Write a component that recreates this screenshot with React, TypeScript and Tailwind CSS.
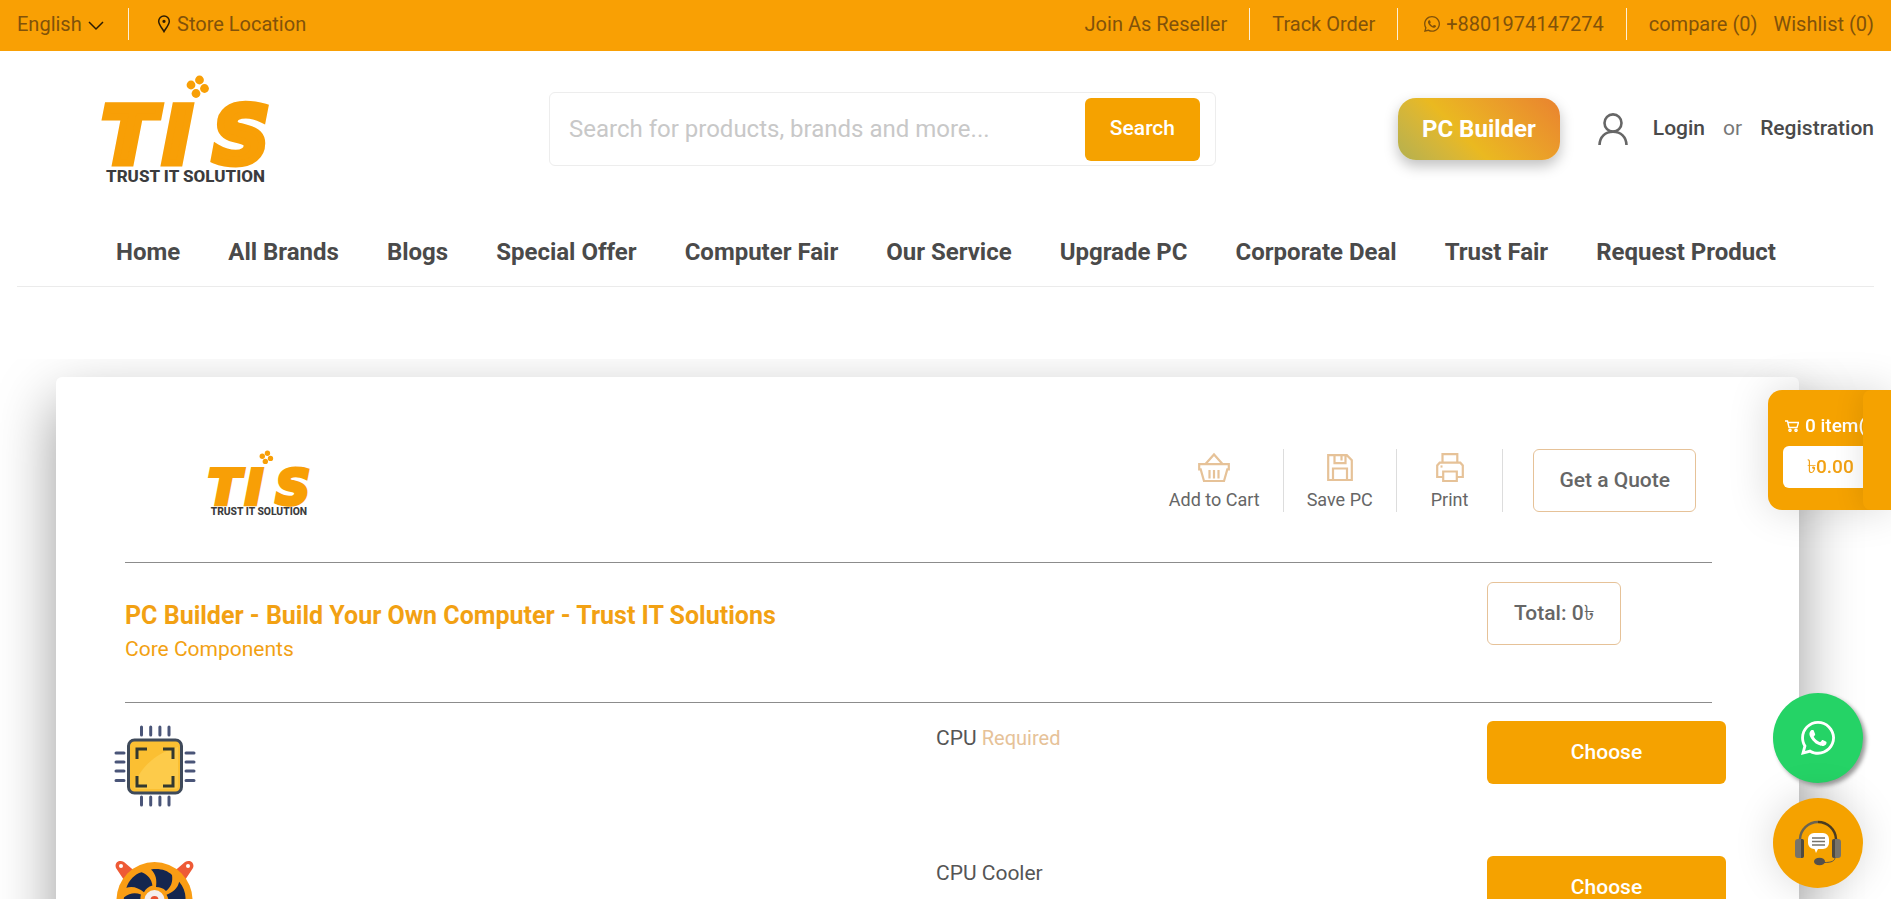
import React from "react";

const navLinks = [
  "Home",
  "All Brands",
  "Blogs",
  "Special Offer",
  "Computer Fair",
  "Our Service",
  "Upgrade PC",
  "Corporate Deal",
  "Trust Fair",
  "Request Product",
];

const Logo: React.FC<{ className: string }> = ({ className }) => (
  <svg viewBox="0 -2 186 112" className={className} role="img" aria-label="TIS Trust IT Solution">
    <g fill="#f89f06">
      <circle cx="91" cy="10" r="4.4" />
      <circle cx="99.5" cy="5" r="4.4" />
      <circle cx="104.5" cy="13.5" r="4.4" />
      <circle cx="96" cy="18.5" r="4.4" />
    </g>
    <text
      x="2 63 113"
      y="88"
      fontFamily="'DejaVu Sans', sans-serif"
      fontSize="78"
      fontWeight="700"
      fontStyle="italic"
      fill="#f89f06"
      stroke="#f89f06"
      strokeWidth="7"
    >
      TIS
    </text>
    <text
      x="6"
      y="107"
      fontFamily="Roboto, sans-serif"
      fontSize="17"
      fontWeight="800"
      fill="#3b3b3d"
    >
      TRUST IT SOLUTION
    </text>
  </svg>
);

const PinIcon = () => (
  <svg viewBox="0 0 14 18" className="h-[18px] w-[14px]" fill="none" stroke="#2c1c04" strokeWidth="1.5">
    <path d="M7 16.6C5.200 13.300 1.700 9.500 1.700 6.200a5.300 5.300 0 0 1 10.600 0C12.300 9.500 8.800 13.300 7 16.600z" />
    <circle cx="7" cy="6.3" r="0.9" fill="#2c1c04" />
  </svg>
);

const WhatsappIcon: React.FC<{ className: string }> = ({ className }) => (
  <svg viewBox="0 32 448 448" className={className} fill="currentColor">
    <path d="M380.900 97.100C339 55.100 283.200 32 223.900 32c-122.400 0-222 99.600-222 222 0 39.100 10.200 77.300 29.600 111L0 480l117.700-30.900c32.400 17.700 68.900 27 106.100 27h.1c122.300 0 224.100-99.600 224.100-222 0-59.300-25.200-115-67.100-157zm-157 341.600c-33.200 0-65.700-8.900-94-25.700l-6.700-4-69.800 18.300L72 359.200l-4.400-7c-18.500-29.400-28.200-63.300-28.200-98.200 0-101.700 82.800-184.500 184.600-184.500 49.300 0 95.600 19.200 130.400 54.100 34.800 34.900 56.200 81.200 56.100 130.500 0 101.800-84.900 184.600-186.600 184.600zm101.200-138.200c-5.500-2.800-32.800-16.200-37.900-18-5.100-1.900-8.800-2.800-12.500 2.800-3.700 5.600-14.300 18-17.600 21.800-3.200 3.700-6.500 4.200-12 1.400-32.600-16.300-54-29.100-75.500-66-5.700-9.800 5.700-9.100 16.300-30.300 1.800-3.700.9-6.900-.5-9.700-1.400-2.800-12.500-30.100-17.100-41.200-4.500-10.800-9.100-9.300-12.500-9.500-3.200-.2-6.900-.2-10.600-.2-3.700 0-9.700 1.400-14.800 6.900-5.100 5.600-19.400 19-19.400 46.300 0 27.300 19.900 53.700 22.600 57.400 2.800 3.700 39.100 59.700 94.800 83.800 35.200 15.200 49 16.500 66.600 13.900 10.700-1.600 32.800-13.400 37.400-26.400 4.600-13 4.600-24.100 3.200-26.400-1.300-2.500-5-3.900-10.500-6.600z" />
  </svg>
);

const UserIcon = () => (
  <svg viewBox="0 0 30 32" className="h-8 w-[30px]" fill="none" stroke="#666" strokeWidth="2.6">
    <ellipse cx="15" cy="10" rx="8.5" ry="8.6" />
    <path d="M1.500 32C1.800 24 7 18.800 15 18.800S28.200 24 28.500 32" />
  </svg>
);

const BasketIcon = () => (
  <svg viewBox="0 0 32 30" className="h-[30px] w-8 shrink-0" fill="none" stroke="#e6c298" strokeWidth="2.2">
    <path d="M7.500 12 16 2.500 24.500 12M1.200 12.200h29.600v5.200h-1.500L26 29H6L2.700 17.400H1.200z" />
    <path d="M11.500 18v8.500M16 18v8.500M20.500 18v8.500" />
  </svg>
);

const SaveIcon = () => (
  <svg viewBox="0 0 26 30" className="h-[30px] w-[26px] shrink-0" fill="none" stroke="#e6c298" strokeWidth="2.2">
    <path d="M1.200 3.200h18.600l5 5V28H1.200zM6 28V16.500h14V28M7.500 3.200v8h11v-8M14.500 4v4.500" />
  </svg>
);

const PrintIcon = () => (
  <svg viewBox="0 0 28 30" className="h-[30px] w-7 shrink-0" fill="none" stroke="#e6c298" strokeWidth="2.2">
    <path d="M6.500 11V2.200h14.800V11M7 25H1.200V13.500l2.500-2.800h20.600l2.500 2.800V25H21M7.200 19.500h13.600V29H7.200z" />
    <path d="M4.500 14.500h2" />
  </svg>
);

const CpuIcon = () => (
  <svg viewBox="0 0 82 82" className="h-[82px] w-[82px]" fill="none">
    <g stroke="#4a5578" strokeWidth="3" strokeLinecap="round">
      <path d="M27.500 2v8M36.700 2v8M45.900 2v8M55 2v8M27.500 72v8M36.700 72v8M45.900 72v8M55 72v8" />
      <path d="M2 28h8M2 37h8M2 46h8M2 55.500h8M72 28h8M72 37h8M72 46h8M72 55.500h8" />
    </g>
    <rect x="14.5" y="15" width="53" height="53" rx="6" fill="#fbbf32" stroke="#3f4a5a" strokeWidth="3" />
    <path d="M20 61C26 42 42 28 64 22V61a3 3 0 0 1-3 3H23a3 3 0 0 1-3-3z" fill="#fdcb4a" />
    <path d="M23 34V24h10M49 24h10v10M59 51v10H49M33 61H23V51" stroke="#33382f" strokeWidth="3" />
  </svg>
);

const FanIcon = () => (
  <svg viewBox="0 0 82 82" className="h-[82px] w-[82px]">
    <g fill="#ee5a36">
      <path d="M2 8C0 3 5-1 10 2L24 14 14 26zM79 8c2-5-3-9-8-6L57 14l10 12z" />
      <path d="M2 74c-2 5 3 9 8 6l14-12-10-12zM79 74c2 5-3 9-8 6L57 68l10-12z" />
    </g>
    <circle cx="7" cy="6" r="2" fill="#fff" />
    <circle cx="74" cy="6" r="2" fill="#fff" />
    <circle cx="40.5" cy="40" r="38" fill="#f99d14" />
    <g fill="#14264f">
      {[0, 60, 120, 180, 240, 300].map((deg) => (
        <path
          key={deg}
          d="M42 27C43 20 42 14 37 9.500c8-1.500 16 .5 21 5.500 1 7-1 12-6 16-3-3-6-4-10-4z"
          transform={`rotate(${deg} 40.5 40)`}
        />
      ))}
    </g>
    <circle cx="40.5" cy="40" r="10" fill="#f4eeee" />
    <circle cx="40.5" cy="40" r="4" fill="#e8502f" />
  </svg>
);

const HeadsetIcon = () => (
  <svg viewBox="0 0 48 46" className="h-[46px] w-12" fill="none">
    <path d="M6 21v-2a18 18 0 0 1 18-17" stroke="#6b6350" strokeWidth="2.5" />
    <path d="M24 2a18 18 0 0 1 18 17v2" stroke="#4a3c20" strokeWidth="2.5" />
    <rect x="1" y="19" width="9" height="19" rx="3" fill="#77736a" />
    <path d="M7 19h1a2 2 0 0 1 2 2v15a2 2 0 0 1-2 2H7z" fill="#4f4a40" />
    <rect x="38" y="19" width="9" height="19" rx="3" fill="#77736a" />
    <path d="M41 19h-1a2 2 0 0 0-2 2v15a2 2 0 0 0 2 2h1z" fill="#4f4a40" />
    <path d="M41 37c0 4-3 5.500-11 5.500" stroke="#5d5648" strokeWidth="1" />
    <ellipse cx="25.5" cy="41.5" rx="5.5" ry="3.8" fill="#55504a" />
    <path d="M20 13h9a6 6 0 0 1 6 6v4a6 6 0 0 1-6 6h-5l-2 4-1.500-4H20a6 6 0 0 1-6-6v-4a6 6 0 0 1 6-6z" fill="#fff" />
    <path d="M18 18h13M18 21.500h13M18 25h13" stroke="#77736a" strokeWidth="1.3" />
  </svg>
);

const CartIcon = () => (
  <svg viewBox="0 0 14 12" className="h-3 w-3.5 shrink-0" fill="none" stroke="#fff" strokeWidth="1.4">
    <path d="M0 1h2.500L4 7.500h8l1.500-5H3" />
    <circle cx="5" cy="10.3" r="1.1" />
    <circle cx="11" cy="10.3" r="1.1" />
  </svg>
);

const tools = [
  { label: "Add to Cart", icon: <BasketIcon />, padding: "px-[23px]" },
  { label: "Save PC", icon: <SaveIcon />, padding: "px-[23px]" },
  { label: "Print", icon: <PrintIcon />, padding: "px-[34px]" },
];

const parts = [
  { name: "CPU", required: true, icon: <CpuIcon /> },
  { name: "CPU Cooler", required: false, icon: <FanIcon /> },
];

const Divider = () => <span className="h-8 w-px bg-[#fdf0d8]" />;

const TopBar: React.FC = () => (
  <div className="flex h-[51px] items-center justify-between bg-[#f9a004] px-[17px] pb-1 text-[20px] text-[#81520a]">
    <div className="flex items-center gap-6">
      <label className="flex items-center gap-1.5">
        <span className="sr-only">Language</span>
        <select className="h-8 appearance-none bg-transparent p-0 leading-8 outline-none">
          <option>English</option>
        </select>
        <svg viewBox="0 0 16 10" className="mt-1 h-2.5 w-4" fill="none" stroke="#2c1c04" strokeWidth="1.5">
          <path d="M1 1l7 7 7-7" />
        </svg>
      </label>
      <Divider />
      <a href="#" className="flex items-center gap-1.5 pl-1">
        <PinIcon />
        Store Location
      </a>
    </div>
    <div className="flex items-center gap-[22px]">
      <a href="#">Join As Reseller</a>
      <Divider />
      <a href="#">Track Order</a>
      <Divider />
      <a href="#" className="flex items-center gap-1.5 pl-1">
        <WhatsappIcon className="h-4 w-4" />
        +8801974147274
      </a>
      <Divider />
      <div className="flex gap-4">
        <a href="#">compare (0)</a>
        <a href="#">Wishlist (0)</a>
      </div>
    </div>
  </div>
);

const Header: React.FC = () => (
  <header className="px-[17px]">
    <div className="grid h-[156px] grid-cols-[532fr_667fr_658fr] items-center">
      <a href="#" className="pl-[83px]">
        <Logo className="h-[112px] w-[186px]" />
      </a>
      <form className="flex h-[74px] items-center rounded-md border border-[#ededed] pr-[15px] pl-[19px]">
        <input
          type="text"
          aria-label="Search"
          placeholder="Search for products, brands and more..."
          className="min-w-0 flex-1 text-[24px] outline-none placeholder:text-[#c8c8c8]"
        />
        <button type="button" className="h-[63px] rounded-md bg-[#f5a200] px-[25px] text-[21px] font-medium text-white">
          Search
        </button>
      </form>
      <div className="flex items-center justify-end text-[21px] font-medium text-[#4a4a4a]">
        <button
          type="button"
          className="mr-[38px] h-[62px] rounded-[18px] bg-linear-45 from-[#b3b04f] via-[#eab920] via-40% to-[#e9822f] px-6 text-[24px] font-bold text-white shadow-[0_6px_14px_rgba(0,0,0,0.25)]"
        >
          PC Builder
        </button>
        <UserIcon />
        <a href="#" className="ml-[25px]">Login</a>
        <span className="mx-[18px] font-normal text-[#777]">or</span>
        <a href="#">Registration</a>
      </div>
    </div>
    <nav className="flex gap-12 border-b border-[#ebebeb] pt-[30px] pb-[19px] pl-[99px] text-[24px] leading-[30px] font-bold whitespace-nowrap text-[#4a4a4a]">
      {navLinks.map((link) => (
        <a key={link} href="#">
          {link}
        </a>
      ))}
    </nav>
  </header>
);

const Builder: React.FC = () => (
  <main className="mt-[72px] overflow-hidden pt-[18px] pr-[92px] pl-[56px]">
    <div className="rounded-md bg-white pt-[72px] pr-[73px] pb-20 pl-[55px] shadow-[0_25px_60px_rgba(0,0,0,0.4)]">
      <div className="mx-[14px] flex items-start justify-between border-b border-[#8c8c8c] pr-4 pb-[45px] pl-[82px]">
        <Logo className="h-[68px] w-[113px]" />
        <div className="flex">
          {tools.map((tool) => (
            <button
              key={tool.label}
              type="button"
              className={`flex h-[63px] flex-col items-center gap-1.5 border-r border-[#ddd] pt-[3px] text-[18px] leading-6 text-[#666] ${tool.padding}`}
            >
              {tool.icon}
              {tool.label}
            </button>
          ))}
          <button
            type="button"
            className="ml-[30px] h-[63px] rounded-md border border-[#e6c298] px-[25px] text-[21px] font-medium text-[#666]"
          >
            Get a Quote
          </button>
        </div>
      </div>

      <div className="grid grid-cols-[825fr_551fr_239fr] pt-[19px]">
        <div className="col-span-2 pt-[18px] pb-[38px] pl-[14px] text-[#f2a113]">
          <h1 className="text-[25px] leading-8 font-bold">
            PC Builder - Build Your Own Computer - Trust IT Solutions
          </h1>
          <p className="pt-0.5 text-[21px] leading-[30px]">Core Components</p>
        </div>
        <div>
          <p className="inline-flex h-[63px] items-center rounded-md border border-[#e6c298] px-[26px] text-[21px] font-medium text-[#666]">
            Total: 0৳
          </p>
        </div>
      </div>
      <hr className="mx-[14px] border-[#8c8c8c]" />

      {parts.map((part) => (
        <div key={part.name} className="grid h-[135px] grid-cols-[825fr_551fr_239fr] items-start pt-[18px]">
          <div className="pt-1 pl-[3px]">{part.icon}</div>
          <p className="pt-0.5 text-[21px] leading-[30px] text-[#555]">
            {part.name} {part.required && <span className="text-[20px] text-[#e6c298]">Required</span>}
          </p>
          <button type="button" className="h-[63px] rounded-md bg-[#f5a200] text-[21px] font-medium text-white">
            Choose
          </button>
        </div>
      ))}
    </div>
  </main>
);

const FloatingWidgets: React.FC = () => (
  <>
    <a
      href="#"
      className="fixed top-[390px] right-0 flex h-[120px] w-[123px] overflow-hidden rounded-l-[14px] bg-[#f5a200] text-[19px] font-medium shadow-[0_0_40px_rgba(0,0,0,0.15)]"
    >
      <div className="w-[95px] overflow-hidden pt-[22px] pl-[15px]">
        <div className="flex items-center gap-1.5 pl-0.5 leading-7 whitespace-nowrap text-white">
          <CartIcon />
          <span>0 item(s)</span>
        </div>
        <div className="mt-1.5 h-[42px] w-[110px] rounded-md bg-white pl-6 leading-[42px] text-[#f2a113]">৳0.00</div>
      </div>
      <div className="w-7 rounded-l-lg bg-[#f5a200] shadow-[0_0_30px_rgba(0,0,0,0.12)]" />
    </a>
    <div className="fixed right-7 bottom-[11px] flex flex-col gap-[15px]">
      <a
        href="#"
        aria-label="WhatsApp"
        className="flex h-[90px] w-[90px] items-center justify-center rounded-full bg-[#25d366] text-white shadow-[3px_3px_4px_#999]"
      >
        <WhatsappIcon className="h-[34px] w-[34px]" />
      </a>
      <button
        type="button"
        aria-label="Live chat"
        className="flex h-[90px] w-[90px] items-center justify-center rounded-full bg-[#f5a200] shadow-[0_0_40px_rgba(0,0,0,0.15)]"
      >
        <HeadsetIcon />
      </button>
    </div>
  </>
);

export default function App() {
  return (
    <div className="h-screen overflow-hidden bg-white font-['Roboto',sans-serif]">
      <TopBar />
      <Header />
      <Builder />
      <FloatingWidgets />
    </div>
  );
}
